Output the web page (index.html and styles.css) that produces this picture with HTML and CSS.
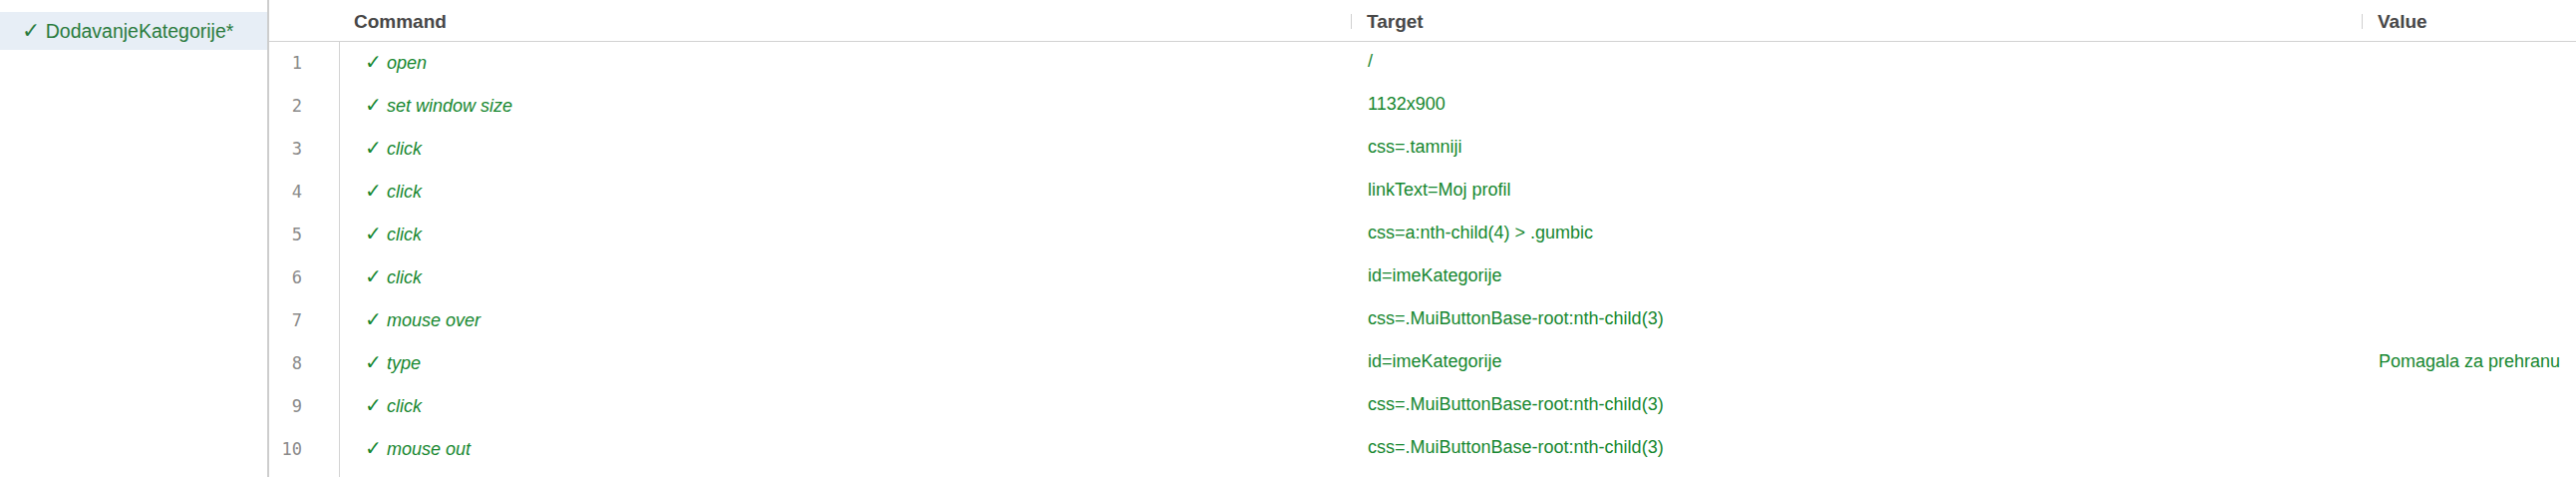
FILE: index.html
```html
<!DOCTYPE html>
<html lang="hr">
<head>
<meta charset="utf-8">
<title>Selenium IDE – DodavanjeKategorije</title>
<link rel="stylesheet" href="styles.css">
</head>
<body>
<div class="app">
  <aside class="suite">
    <div class="test selected"><span class="tick">✓</span> DodavanjeKategorije*</div>
  </aside>
  <main class="editor">
    <div class="row head">
      <div class="hcell hidx"></div>
      <div class="hcell hcmd">Command</div>
      <div class="hcell htarget"><span class="sep"></span>Target</div>
      <div class="hcell hvalue"><span class="sep"></span>Value</div>
    </div>
    <div class="row"><div class="idx">1</div><div class="cmd"><span class="tick">✓</span> open</div><div class="target">/</div><div class="value"></div></div>
    <div class="row"><div class="idx">2</div><div class="cmd"><span class="tick">✓</span> set window size</div><div class="target">1132x900</div><div class="value"></div></div>
    <div class="row"><div class="idx">3</div><div class="cmd"><span class="tick">✓</span> click</div><div class="target">css=.tamniji</div><div class="value"></div></div>
    <div class="row"><div class="idx">4</div><div class="cmd"><span class="tick">✓</span> click</div><div class="target">linkText=Moj profil</div><div class="value"></div></div>
    <div class="row"><div class="idx">5</div><div class="cmd"><span class="tick">✓</span> click</div><div class="target">css=a:nth-child(4) &gt; .gumbic</div><div class="value"></div></div>
    <div class="row"><div class="idx">6</div><div class="cmd"><span class="tick">✓</span> click</div><div class="target">id=imeKategorije</div><div class="value"></div></div>
    <div class="row"><div class="idx">7</div><div class="cmd"><span class="tick">✓</span> mouse over</div><div class="target">css=.MuiButtonBase-root:nth-child(3)</div><div class="value"></div></div>
    <div class="row"><div class="idx">8</div><div class="cmd"><span class="tick">✓</span> type</div><div class="target">id=imeKategorije</div><div class="value">Pomagala za prehranu</div></div>
    <div class="row"><div class="idx">9</div><div class="cmd"><span class="tick">✓</span> click</div><div class="target">css=.MuiButtonBase-root:nth-child(3)</div><div class="value"></div></div>
    <div class="row"><div class="idx">10</div><div class="cmd"><span class="tick">✓</span> mouse out</div><div class="target">css=.MuiButtonBase-root:nth-child(3)</div><div class="value"></div></div>
    <div class="row filler"><div class="idx"></div></div>
  </main>
</div>
</body>
</html>
```

FILE: styles.css
```css
* { box-sizing: border-box; }

body {
  margin: 0;
  background: #ffffff;
  font-family: "Liberation Sans", Arial, sans-serif;
}

.app {
  display: flex;
  height: 100vh;
  overflow: hidden;
}

.suite {
  flex: none;
  width: 270px;
  border-right: 2px solid #cdcdcd;
  padding-top: 12px;
}

.test {
  height: 38px;
  line-height: 38px;
  padding-left: 22px;
  font-size: 19.5px;
  color: #2a7b3d;
  white-space: nowrap;
}

.test.selected {
  background: #e7eef6;
}

.tick {
  font-family: "DejaVu Sans", sans-serif;
  font-style: normal;
  font-size: 1.12em;
  line-height: 1;
}

.editor {
  flex: 1;
  min-width: 0;
  display: flex;
  flex-direction: column;
}

.row {
  display: grid;
  grid-template-columns: 71px 1014px 1014px 1fr;
  height: 43px;
  flex: none;
  white-space: nowrap;
}

.row.head {
  height: 42px;
  border-bottom: 1px solid #d2d2d2;
}

.hcell {
  display: flex;
  align-items: center;
  padding-top: 2px;
  font-size: 19px;
  font-weight: bold;
  color: #474747;
}

.hcmd {
  padding-left: 14px;
}

.sep {
  display: inline-block;
  width: 1px;
  height: 15px;
  margin-right: 15px;
  background: #d0d0d0;
}

.idx {
  border-right: 1px solid #d4d4d4;
  text-align: right;
  padding-right: 37px;
  font-family: "DejaVu Sans Mono", "Liberation Mono", monospace;
  font-size: 17px;
  line-height: 43px;
  color: #8a8a8a;
}

.cmd {
  padding-left: 25px;
  font-size: 18px;
  line-height: 43px;
  font-style: italic;
  color: #16872f;
}

.target,
.value {
  padding-left: 17px;
  font-size: 18px;
  line-height: 39px;
  color: #16872f;
}

.filler {
  flex: 1;
  height: auto;
}
```
